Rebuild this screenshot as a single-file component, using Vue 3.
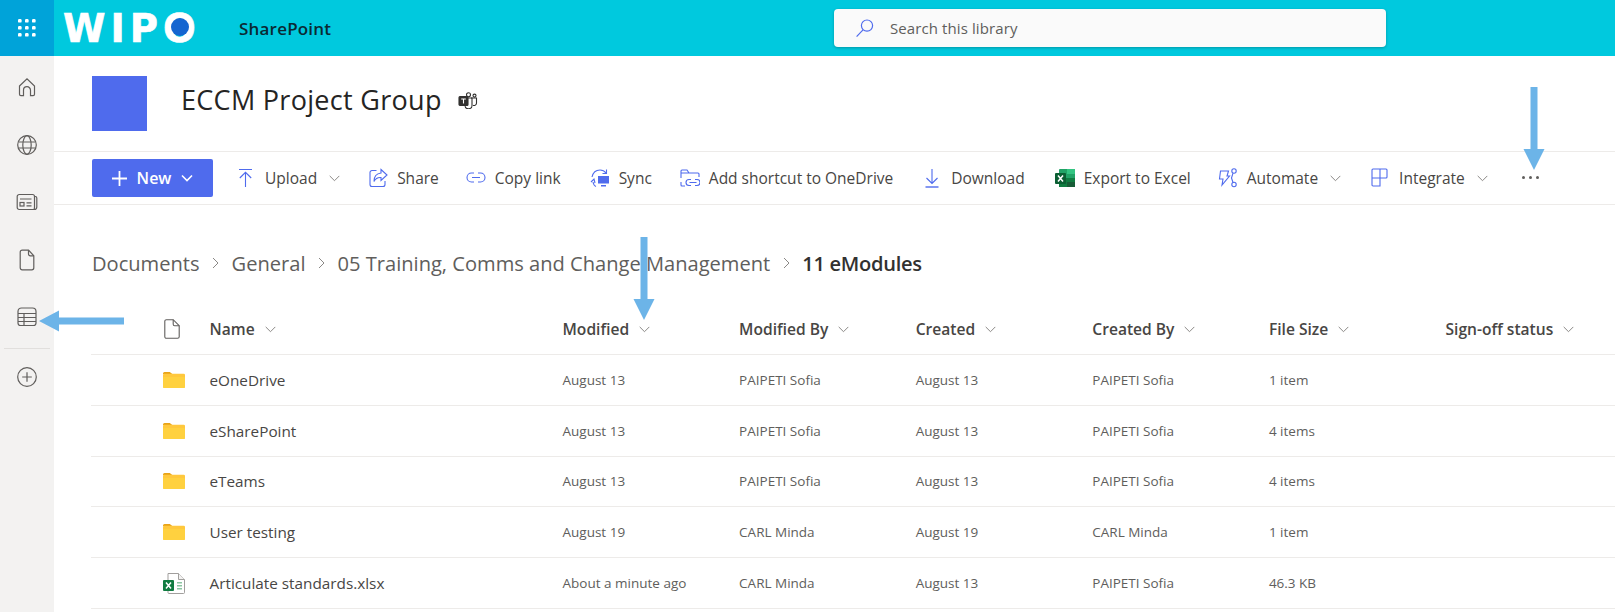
<template>
  <div class="page">
    <!-- TOP BAR -->
    <header class="topbar">
      <div class="waffle">
        <svg width="20" height="20" viewBox="0 0 20 20" fill="#fff">
          <template v-for="y in [1, 8, 15]" :key="y">
            <rect v-for="x in [1, 8, 15]" :key="x" :x="x" :y="y" width="3.6" height="3.6" rx="1.2" />
          </template>
        </svg>
      </div>
      <div class="brand">WIP<span class="brand-o">O</span></div>
      <div class="app-name">SharePoint</div>
      <div class="search">
        <svg width="20" height="20" viewBox="0 0 20 20" fill="none" stroke="#4f6bed" stroke-width="1.2">
          <circle cx="12" cy="7.6" r="5.6" />
          <path d="M8 11.8 1.6 18.6" />
        </svg>
        <span>Search this library</span>
      </div>
    </header>

    <div class="body">
      <!-- LEFT RAIL -->
      <nav class="rail">
        <svg class="rail-icon" viewBox="0 0 22 22">
          <path d="M3.500 10 11 2.800 18.500 10v8.200a1.400 1.400 0 0 1-1.400 1.400h-2.600v-5.400a3.500 3.500 0 0 0-7 0v5.400H4.900a1.400 1.400 0 0 1-1.400-1.400z" />
        </svg>
        <svg class="rail-icon" viewBox="0 0 22 22">
          <circle cx="11" cy="11" r="9.300" />
          <ellipse cx="11" cy="11" rx="4.200" ry="9.300" />
          <path d="M2.300 8h17.400M2.300 14h17.400" />
        </svg>
        <svg class="rail-icon" viewBox="0 0 22 22">
          <path d="M18.500 5.500h.800a1.500 1.500 0 0 1 1.500 1.500v9a2.500 2.500 0 0 1-2.500 2.500H3.200a2 2 0 0 1-2-2V5.500a2 2 0 0 1 2-2h13.300a2 2 0 0 1 2 2v11a2 2 0 0 0 0 2" />
          <rect x="4" y="11.500" width="4" height="3.500" />
          <path d="M4 8h11.500M10.500 11.800h5M10.500 14.800h5" />
        </svg>
        <svg class="rail-icon" viewBox="0 0 22 22">
          <path d="M4.200 3.200A2 2 0 0 1 6.200 1.200h6.300l5.300 5.600v12a2 2 0 0 1-2 2H6.200a2 2 0 0 1-2-2z" />
          <path d="M12.500 1.200v3.800a1.800 1.800 0 0 0 1.800 1.800h3.500" />
        </svg>
        <svg class="rail-icon" viewBox="0 0 22 22">
          <path d="M2 5.500a3.500 3.500 0 0 1 3.500-3.500h11A3.500 3.500 0 0 1 20 5.500V17a2.500 2.500 0 0 1-2.500 2.500h-13A2.500 2.500 0 0 1 2 17z" />
          <path d="M2 7.500h18M2 11.500h18M2 15.500h18M8 7.500v12" />
        </svg>
        <div class="rail-divider"></div>
        <svg class="rail-icon" viewBox="0 0 22 22">
          <circle cx="11" cy="11" r="9.300" />
          <path d="M11 6.200v9.600M6.200 11h9.600" />
        </svg>
      </nav>

      <main class="main">
        <!-- SITE HEADER -->
        <section class="site-head">
          <div class="site-logo"></div>
          <h1>ECCM Project Group</h1>
          <svg class="teams" width="20" height="17" viewBox="0 0 20 17" fill="none" stroke="#323130" stroke-width="1.100">
            <circle cx="10.500" cy="2.800" r="2" />
            <circle cx="16.500" cy="3.600" r="1.500" />
            <path d="M13 6h5.500v5a2.500 2.500 0 0 1-3.500 2.300" />
            <path d="M6.500 6H14v7a3.500 3.500 0 0 1-7 .5" />
            <rect x="1" y="4.500" width="9" height="9" rx="1" fill="#323130" />
            <path d="M3.200 7h4.600M5.500 7v4.600" stroke="#fff" />
          </svg>
        </section>

        <!-- COMMAND BAR -->
        <section class="commands">
          <button class="new-btn">
            <svg width="15" height="15" viewBox="0 0 15 15" stroke="#fff" stroke-width="1.800"><path d="M7.500 0v15M0 7.500h15" /></svg>
            <span>New</span>
            <svg width="12" height="8" viewBox="0 0 12 8" fill="none" stroke="#fff" stroke-width="1.600"><path d="m1 1.500 5 5 5-5" /></svg>
          </button>

          <div v-for="c in commands" :key="c.label" class="cmd" :style="{ marginLeft: c.gap + 'px' }">
            <svg class="cmd-icon" :width="c.w" height="20" :viewBox="`0 0 ${c.w} 20`" v-html="c.icon"></svg>
            <span>{{ c.label }}</span>
            <svg v-if="c.menu" class="chev" width="11" height="7" viewBox="0 0 11 7"><path d="m.7.900 4.800 4.800L10.300.900" /></svg>
          </div>

          <div class="more"><i></i><i></i><i></i></div>
        </section>

        <!-- BREADCRUMB -->
        <section class="crumbs">
          <template v-for="b in crumbs" :key="b">
            <span>{{ b }}</span>
            <svg width="7" height="12" viewBox="0 0 7 12"><path d="m1 1 5 5-5 5" /></svg>
          </template>
          <strong>11 eModules</strong>
        </section>

        <!-- FILE LIST -->
        <section class="list">
          <div class="row head">
            <div class="cell-icon">
              <svg width="16" height="20" viewBox="0 0 16 20" fill="none" stroke="#605e5c" stroke-width="1.100">
                <path d="M.8 2.300A1.600 1.600 0 0 1 2.400.7h6.800l6 6v11a1.600 1.600 0 0 1-1.600 1.600H2.400a1.600 1.600 0 0 1-1.600-1.600z" />
                <path d="M9.200.7v4.500a1.500 1.500 0 0 0 1.500 1.500h4.500" />
              </svg>
            </div>
            <div v-for="h in columns" :key="h" class="head-cell">
              <span>{{ h }}</span>
              <svg class="chev" width="11" height="7" viewBox="0 0 11 7"><path d="m.7.900 4.800 4.800L10.300.900" /></svg>
            </div>
          </div>

          <div v-for="f in files" :key="f.name" class="row">
            <div class="cell-icon">
              <svg v-if="f.folder" width="22" height="16" viewBox="0 0 22 16">
                <path d="M0 1.500A1.500 1.500 0 0 1 1.500 0h5.300l2.500 2H0z" fill="#e8a317" />
                <rect x="0" y="1.800" width="22" height="14.200" rx="1.300" fill="#ffc83d" />
                <rect x="0" y="5" width="22" height="11" rx="1.300" fill="#ffd13f" />
              </svg>
              <svg v-else width="22" height="22" viewBox="0 0 22 22">
                <path d="M5 1.500h10.500l6 6v13a1 1 0 0 1-1 1H6a1 1 0 0 1-1-1z" fill="#fff" stroke="#a19f9d" />
                <path d="M15.500 1.500v6h6" fill="#f3f2f1" stroke="#a19f9d" />
                <path d="M14 10h5v1.500h-5zM14 13h5v1.500h-5zM14 16h5v1.500h-5z" fill="#8cc5a2" />
                <rect x="0" y="8" width="11" height="11" rx="1" fill="#107c41" />
                <path d="m3 10.500 5 6M8 10.500l-5 6" stroke="#fff" stroke-width="1.500" />
              </svg>
            </div>
            <div class="cell-name">{{ f.name }}</div>
            <div class="cell">{{ f.modified }}</div>
            <div class="cell">{{ f.modifiedBy }}</div>
            <div class="cell">{{ f.created }}</div>
            <div class="cell">{{ f.createdBy }}</div>
            <div class="cell">{{ f.size }}</div>
            <div class="cell"></div>
          </div>
        </section>
      </main>
    </div>

    <!-- ANNOTATION ARROWS -->
    <svg class="arrows" width="1615" height="612" viewBox="0 0 1615 612" fill="#6cb4e8">
      <path d="M1530.500 87h7v62h7l-10.500 21-10.500-21h7z" />
      <path d="M640.500 237h7v62h7l-10.500 21-10.500-21h7z" />
      <path d="M124 317.500v7H59v7l-20-10.500 20-10.500v7z" />
    </svg>
  </div>
</template>

<script setup>
const s = 'fill="none" stroke="#4f6bed" stroke-width="1.1"'

const commands = [
  { label: "Upload", menu: true, gap: 25, w: 18, icon: `<path ${s} d="M1 1.500h13M7.500 19V4.500M1.800 10l5.700-5.700 5.700 5.700"/>` },
  { label: "Share", gap: 29, w: 19, icon: `<path ${s} d="M7.500 2.500H3a2 2 0 0 0-2 2v12a2 2 0 0 0 2 2h11a2 2 0 0 0 2-2V13"/><path ${s} d="M12 1.500l6 5.500-6 5.500V9.500c-3.500-.3-5.500 1-7 4 0-4.500 2.500-8 7-8.500z"/>` },
  { label: "Copy link", gap: 27, w: 20, icon: `<path ${s} stroke-width="1.300" d="M8 5H5.500a4.500 4.500 0 0 0 0 9H8M12 5h2.500a4.500 4.500 0 0 1 0 9H12M6 9.500h8"/>` },
  { label: "Sync", gap: 29, w: 20, icon: `<path ${s} d="M2 9C3 4.500 6 2 10 2c2.500 0 4.500 1 6 3M16.500 1.500V5.500h-4M1 14l3-3 1 4M6 18.500C4.500 18 3.500 16.500 3 14"/><path fill="#4f6bed" d="M8 8h11v7.500H8zM11 17h5v1.500h-5z"/>` },
  { label: "Add shortcut to OneDrive", gap: 28, w: 20, icon: `<path ${s} d="M1 5V3a1 1 0 0 1 1-1h5l2 3h9a1 1 0 0 1 1 1v3M1 5v5M1 5h8M1 14v3a1 1 0 0 0 1 1h3"/><path ${s} d="M11 11.500H9a3 3 0 0 0 0 6h2M15 11.500h2a3 3 0 0 1 0 6h-2M9.500 14.500h7"/>` },
  { label: "Download", gap: 32, w: 17, icon: `<path ${s} d="M7 1v14.500M1.500 10l5.500 5.500 5.500-5.500"/><path stroke="#4f6bed" stroke-width="1.400" d="M.5 19h13"/>` },
  { label: "Export to Excel", gap: 30, w: 20, icon: `<rect x="4" y="1" width="16" height="18" rx="1" fill="#21a366"/><path fill="#107c41" d="M4 10h16v9H4z"/><path fill="#33c481" d="M12 1h8v5h-8z"/><path fill="#185c37" d="M12 14h8v5h-8z"/><rect y="5" width="11" height="11" rx="1" fill="#0b5f33"/><path stroke="#fff" stroke-width="1.500" d="m3 7.500 5 6M8 7.500l-5 6"/>` },
  { label: "Automate", menu: true, gap: 27, w: 20, icon: `<path ${s} d="M2.500 3h8L9 8h2.500L4 17l1-6H1.500z"/><circle ${s} cx="16" cy="3" r="2.200"/><circle ${s} cx="16" cy="16.500" r="2.200"/><path ${s} d="M15 5.200 13.500 10l1.500 4.500"/>` },
  { label: "Integrate", menu: true, gap: 30, w: 19, icon: `<path ${s} d="M2 1h13a1 1 0 0 1 1 1v7a1 1 0 0 1-1 1H9v8H2a1 1 0 0 1-1-1V2a1 1 0 0 1 1-1zM9 1v9M1 10h8"/>` },
]

const crumbs = ["Documents", "General", "05 Training, Comms and Change Management"]

const columns = ["Name", "Modified", "Modified By", "Created", "Created By", "File Size", "Sign-off status"]

const files = [
  { name: "eOneDrive", folder: true, modified: "August 13", modifiedBy: "PAIPETI Sofia", created: "August 13", createdBy: "PAIPETI Sofia", size: "1 item" },
  { name: "eSharePoint", folder: true, modified: "August 13", modifiedBy: "PAIPETI Sofia", created: "August 13", createdBy: "PAIPETI Sofia", size: "4 items" },
  { name: "eTeams", folder: true, modified: "August 13", modifiedBy: "PAIPETI Sofia", created: "August 13", createdBy: "PAIPETI Sofia", size: "4 items" },
  { name: "User testing", folder: true, modified: "August 19", modifiedBy: "CARL Minda", created: "August 19", createdBy: "CARL Minda", size: "1 item" },
  { name: "Articulate standards.xlsx", modified: "About a minute ago", modifiedBy: "CARL Minda", created: "August 13", createdBy: "PAIPETI Sofia", size: "46.3 KB" },
]
</script>

<style>
html,
body {
  margin: 0;
  background: #fff;
}
</style>

<style scoped>
.page {
  position: relative;
  width: 1615px;
  height: 612px;
  overflow: hidden;
  font-family: "Open Sans", "Noto Sans", sans-serif;
  color: #323130;
  background: #fff;
}

/* TOP BAR */
.topbar {
  display: flex;
  align-items: center;
  height: 56px;
  background: #00c9de;
}

.waffle {
  display: flex;
  align-items: center;
  justify-content: center;
  width: 54px;
  height: 56px;
  background: #00a3d9;
}

.brand {
  margin-left: 9px;
  width: 176px;
  font-family: "DejaVu Sans", sans-serif;
  font-size: 38.500px;
  font-weight: 700;
  letter-spacing: 5px;
  color: #fff;
  -webkit-text-stroke: 0.6px #fff;
}

.brand-o {
  position: relative;
}

.brand-o::after {
  content: "";
  position: absolute;
  left: 16.500px;
  top: 50%;
  width: 18px;
  height: 18px;
  margin: -10px 0 0 -9px;
  border-radius: 50%;
  background: #1565d0;
}

.app-name {
  width: 595px;
  font-size: 17px;
  font-weight: 600;
  letter-spacing: 0.2px;
  color: #0b2a33;
}

.search {
  display: flex;
  align-items: center;
  gap: 15px;
  width: 552px;
  height: 38px;
  padding-left: 21px;
  box-sizing: border-box;
  background: #fafafa;
  border-radius: 4px;
  box-shadow: 0 1px 3px rgba(0, 0, 0, 0.25);
  font-size: 15px;
  letter-spacing: 0.1px;
  color: #605e5c;
}

/* LAYOUT */
.body {
  display: flex;
  height: 556px;
}

.rail {
  display: flex;
  flex-direction: column;
  align-items: center;
  width: 54px;
  flex: none;
  padding-top: 20px;
  box-sizing: border-box;
  background: #f3f2f1;
}

.rail-icon {
  width: 22px;
  height: 22px;
  flex: none;
  margin-bottom: 35.600px;
  fill: none;
  stroke: #605e5c;
  stroke-width: 1.200;
}

.rail-divider {
  width: 46px;
  height: 1px;
  flex: none;
  margin: -16px 0 17px;
  background: #e1dfdd;
}

.main {
  flex: 1;
  min-width: 0;
}

/* SITE HEADER */
.site-head {
  display: flex;
  align-items: center;
  height: 95px;
  padding-left: 38px;
  border-bottom: 1px solid #edebe9;
}

.site-logo {
  width: 55px;
  height: 55px;
  background: #4f6bed;
}

.site-head h1 {
  margin: 0 16px 9px 34px;
  font-size: 27px;
  font-weight: 400;
  letter-spacing: 0.3px;
  color: #252423;
}

.teams {
  margin-bottom: 7px;
}

/* COMMAND BAR */
.commands {
  display: flex;
  align-items: center;
  height: 52px;
  padding-left: 38px;
  border-bottom: 1px solid #edebe9;
}

.new-btn {
  display: flex;
  align-items: center;
  justify-content: center;
  gap: 10px;
  width: 121px;
  height: 38px;
  padding: 0;
  border: 0;
  border-radius: 2px;
  background: #4f6bed;
  font: 600 16px "Open Sans", sans-serif;
  color: #fff;
}

.cmd {
  display: flex;
  align-items: center;
  gap: 9px;
  font-size: 15.500px;
  color: #484644;
  white-space: nowrap;
}

.cmd .chev {
  margin-left: 3px;
}

.chev {
  fill: none;
  stroke: #8a8886;
  stroke-width: 1;
}

.more {
  display: flex;
  gap: 4px;
  margin: -2px 0 0 34px;
}

.more i {
  width: 3px;
  height: 3px;
  border-radius: 50%;
  background: #605e5c;
}

/* BREADCRUMB */
.crumbs {
  display: flex;
  align-items: center;
  height: 99px;
  padding: 17px 0 0 38px;
  box-sizing: border-box;
  gap: 12.500px;
  font-size: 20.100px;
  color: #605e5c;
}

.crumbs svg {
  fill: none;
  stroke: #8a8886;
}

.crumbs strong {
  font-weight: 600;
  letter-spacing: -0.3px;
  color: #323130;
}

/* FILE LIST */
.list {
  margin-left: 37px;
}

.row {
  display: grid;
  grid-template-columns: 118.500px 353px repeat(5, 176.600px) 1fr;
  align-items: center;
  height: 50.800px;
  box-sizing: border-box;
  border-bottom: 1px solid #edebe9;
}

.row.head {
  height: 51px;
  font-weight: 600;
  font-size: 15.600px;
  color: #484644;
}

.cell-icon {
  display: flex;
  align-items: center;
  justify-content: flex-end;
  padding-right: 25px;
}

.head .cell-icon {
  padding-right: 30px;
}

.head-cell {
  display: flex;
  align-items: center;
  gap: 10px;
  white-space: nowrap;
}

.cell-name {
  font-size: 15.300px;
  color: #484644;
}

.cell {
  font-size: 13.500px;
  color: #605e5c;
  white-space: nowrap;
}

/* ARROWS */
.arrows {
  position: absolute;
  left: 0;
  top: 0;
  pointer-events: none;
}
</style>
